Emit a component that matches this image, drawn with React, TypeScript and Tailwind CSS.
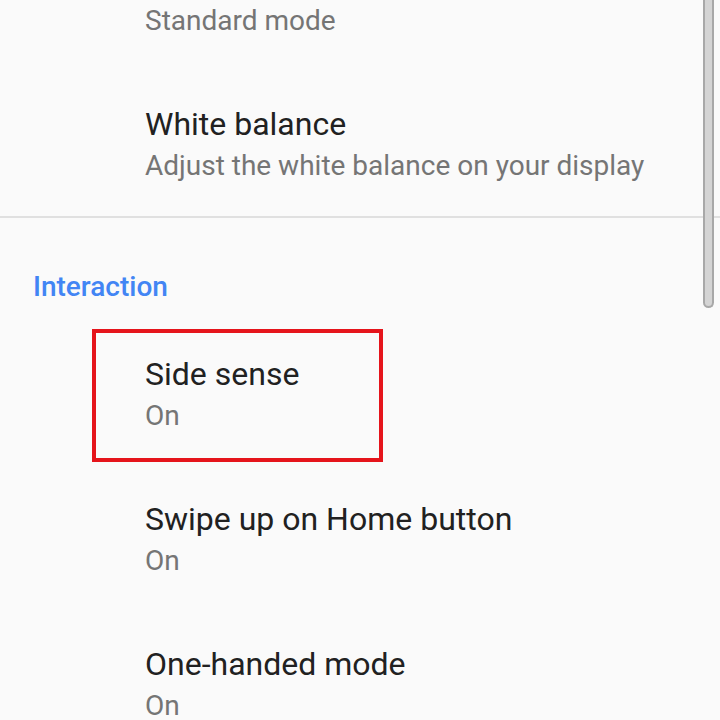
import React from 'react'

interface Pref {
  title: string
  summary: string
  highlight?: boolean
}

const interaction: Pref[] = [
  { title: 'Side sense', summary: 'On', highlight: true },
  { title: 'Swipe up on Home button', summary: 'On' },
  { title: 'One-handed mode', summary: 'On' },
]

function PrefRow({ title, summary, highlight }: Pref) {
  return (
    <div className="relative pl-[145px] pt-[46px] pb-[16px]">
      {highlight && (
        <div className="absolute left-[92px] top-[22px] w-[291px] h-[133px] border-4 border-[#e5141b] pointer-events-none" />
      )}
      <div className="text-[32px] leading-[42px] text-[#212121]">{title}</div>
      <div className="pt-px text-[28px] leading-[40px] text-[#757575]">{summary}</div>
    </div>
  )
}

export default function App() {
  return (
    <div
      className="relative w-[720px] h-[720px] overflow-hidden bg-[#fafafa]"
      style={{ fontFamily: 'Roboto, "Noto Sans", sans-serif' }}
    >
      {/* tail of the previous preference */}
      <div className="pl-[145px] pt-px text-[28px] leading-[40px] text-[#757575]">Standard mode</div>

      <div className="pl-[145px] pt-[62px]">
        <div className="text-[32px] leading-[42px] text-[#212121]">White balance</div>
        <div className="pt-px text-[28px] leading-[40px] text-[#757575]">Adjust the white balance on your display</div>
      </div>

      <div className="mt-[30px] h-[2px] bg-[#e0e0e0]" />

      <div className="pl-[33px] pt-[49px] text-[28px] leading-[40px] font-medium text-[#4285f4]">Interaction</div>

      <div>
        {interaction.map(p => (
          <PrefRow key={p.title} {...p} />
        ))}
      </div>

      {/* scroll indicator */}
      <div className="absolute top-0 left-[703px] w-[11px] h-[308px] rounded-b-full border-2 border-t-0 border-[#a8a8a8] bg-[#d4d4d4]" />
    </div>
  )
}
